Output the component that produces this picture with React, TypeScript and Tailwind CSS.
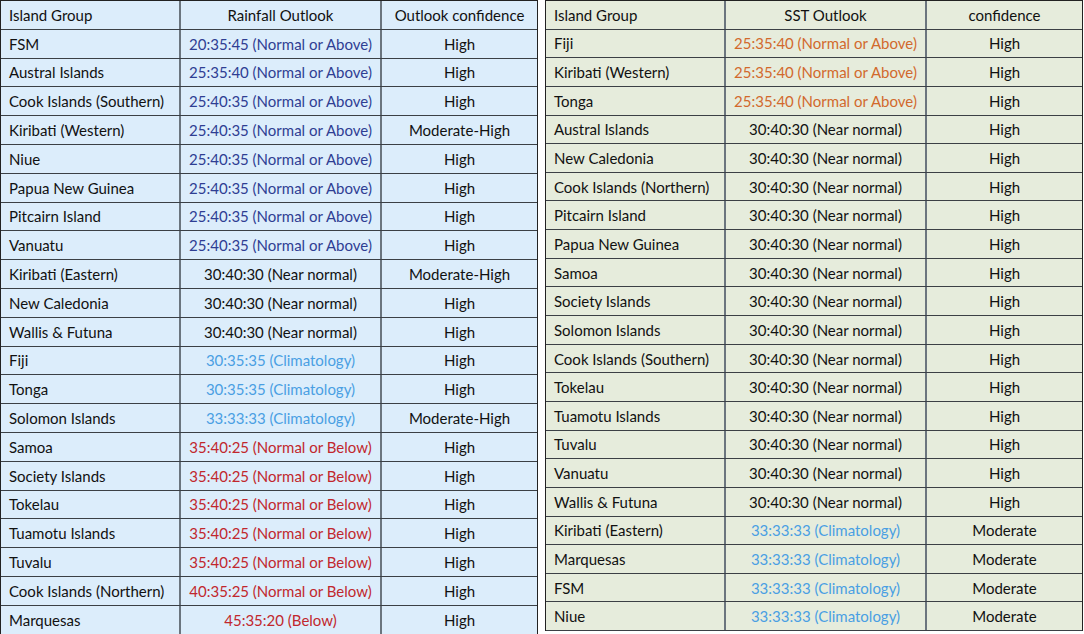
type Tone = "blue" | "sky" | "red" | "orange" | "plain";

interface Row {
  island: string;
  outlook: string;
  tone: Tone;
  confidence: string;
}

const toneClass: Record<Tone, string> = {
  blue: "text-[#2f3e93]",
  sky: "text-[#4a9fe3]",
  red: "text-[#c1272d]",
  orange: "text-[#d2692c]",
  plain: "text-[#111111]",
};

const rainfall: Row[] = [
  { island: "FSM", outlook: "20:35:45 (Normal or Above)", tone: "blue", confidence: "High" },
  { island: "Austral Islands", outlook: "25:35:40 (Normal or Above)", tone: "blue", confidence: "High" },
  { island: "Cook Islands (Southern)", outlook: "25:40:35 (Normal or Above)", tone: "blue", confidence: "High" },
  { island: "Kiribati (Western)", outlook: "25:40:35 (Normal or Above)", tone: "blue", confidence: "Moderate-High" },
  { island: "Niue", outlook: "25:40:35 (Normal or Above)", tone: "blue", confidence: "High" },
  { island: "Papua New Guinea", outlook: "25:40:35 (Normal or Above)", tone: "blue", confidence: "High" },
  { island: "Pitcairn Island", outlook: "25:40:35 (Normal or Above)", tone: "blue", confidence: "High" },
  { island: "Vanuatu", outlook: "25:40:35 (Normal or Above)", tone: "blue", confidence: "High" },
  { island: "Kiribati (Eastern)", outlook: "30:40:30 (Near normal)", tone: "plain", confidence: "Moderate-High" },
  { island: "New Caledonia", outlook: "30:40:30 (Near normal)", tone: "plain", confidence: "High" },
  { island: "Wallis & Futuna", outlook: "30:40:30 (Near normal)", tone: "plain", confidence: "High" },
  { island: "Fiji", outlook: "30:35:35 (Climatology)", tone: "sky", confidence: "High" },
  { island: "Tonga", outlook: "30:35:35 (Climatology)", tone: "sky", confidence: "High" },
  { island: "Solomon Islands", outlook: "33:33:33 (Climatology)", tone: "sky", confidence: "Moderate-High" },
  { island: "Samoa", outlook: "35:40:25 (Normal or Below)", tone: "red", confidence: "High" },
  { island: "Society Islands", outlook: "35:40:25 (Normal or Below)", tone: "red", confidence: "High" },
  { island: "Tokelau", outlook: "35:40:25 (Normal or Below)", tone: "red", confidence: "High" },
  { island: "Tuamotu Islands", outlook: "35:40:25 (Normal or Below)", tone: "red", confidence: "High" },
  { island: "Tuvalu", outlook: "35:40:25 (Normal or Below)", tone: "red", confidence: "High" },
  { island: "Cook Islands (Northern)", outlook: "40:35:25 (Normal or Below)", tone: "red", confidence: "High" },
  { island: "Marquesas", outlook: "45:35:20 (Below)", tone: "red", confidence: "High" },
];

const near = "30:40:30 (Near normal)";
const clim = "33:33:33 (Climatology)";

const sst: Row[] = [
  { island: "Fiji", outlook: "25:35:40 (Normal or Above)", tone: "orange", confidence: "High" },
  { island: "Kiribati (Western)", outlook: "25:35:40 (Normal or Above)", tone: "orange", confidence: "High" },
  { island: "Tonga", outlook: "25:35:40 (Normal or Above)", tone: "orange", confidence: "High" },
  { island: "Austral Islands", outlook: near, tone: "plain", confidence: "High" },
  { island: "New Caledonia", outlook: near, tone: "plain", confidence: "High" },
  { island: "Cook Islands (Northern)", outlook: near, tone: "plain", confidence: "High" },
  { island: "Pitcairn Island", outlook: near, tone: "plain", confidence: "High" },
  { island: "Papua New Guinea", outlook: near, tone: "plain", confidence: "High" },
  { island: "Samoa", outlook: near, tone: "plain", confidence: "High" },
  { island: "Society Islands", outlook: near, tone: "plain", confidence: "High" },
  { island: "Solomon Islands", outlook: near, tone: "plain", confidence: "High" },
  { island: "Cook Islands (Southern)", outlook: near, tone: "plain", confidence: "High" },
  { island: "Tokelau", outlook: near, tone: "plain", confidence: "High" },
  { island: "Tuamotu Islands", outlook: near, tone: "plain", confidence: "High" },
  { island: "Tuvalu", outlook: near, tone: "plain", confidence: "High" },
  { island: "Vanuatu", outlook: near, tone: "plain", confidence: "High" },
  { island: "Wallis & Futuna", outlook: near, tone: "plain", confidence: "High" },
  { island: "Kiribati (Eastern)", outlook: clim, tone: "sky", confidence: "Moderate" },
  { island: "Marquesas", outlook: clim, tone: "sky", confidence: "Moderate" },
  { island: "FSM", outlook: clim, tone: "sky", confidence: "Moderate" },
  { island: "Niue", outlook: clim, tone: "sky", confidence: "Moderate" },
];

interface OutlookTableProps {
  heads: [string, string, string];
  rows: Row[];
  bg: string;
  rowH: string;
}

function OutlookTable({ heads, rows, bg, rowH }: OutlookTableProps) {
  return (
    <div className={`w-[538px] border-l border-r border-t border-[#222] ${bg}`}>
      <div className={`flex ${rowH} border-b border-b-[#3b4045]`}>
        <div className="w-[180px] shrink-0 flex items-center pl-[8px] pt-[1px] border-r-2 border-r-[#6b757e]">{heads[0]}</div>
        <div className="w-[201px] shrink-0 flex items-center justify-center pt-[1px] border-r-2 border-r-[#6b757e]">{heads[1]}</div>
        <div className="flex-1 flex items-center justify-center pt-[1px]">{heads[2]}</div>
      </div>
      {rows.map((row, i) => (
        <div key={i} className={`flex ${rowH} border-b border-b-[#3b4045]`}>
          <div className="w-[180px] shrink-0 flex items-center pl-[8px] pt-[1px] border-r-2 border-r-[#6b757e] whitespace-nowrap">
            {row.island}
          </div>
          <div
            className={`w-[201px] shrink-0 flex items-center justify-center pt-[1px] border-r-2 border-r-[#6b757e] whitespace-nowrap ${toneClass[row.tone]}`}
          >
            {row.outlook}
          </div>
          <div className="flex-1 flex items-center justify-center pt-[1px] whitespace-nowrap">{row.confidence}</div>
        </div>
      ))}
    </div>
  );
}

export default function App() {
  return (
    <div className="w-[1084px] h-[634px] bg-white flex items-start gap-[7px] overflow-hidden font-['Lato',sans-serif] text-[15px] leading-none text-[#111]">
      <OutlookTable
        heads={["Island Group", "Rainfall Outlook", "Outlook confidence"]}
        rows={rainfall}
        bg="bg-[#dcedfb]"
        rowH="h-[28.8px]"
      />
      <OutlookTable
        heads={["Island Group", "SST Outlook", "confidence"]}
        rows={sst}
        bg="bg-[#e6ecdc]"
        rowH="h-[28.65px]"
      />
    </div>
  );
}
